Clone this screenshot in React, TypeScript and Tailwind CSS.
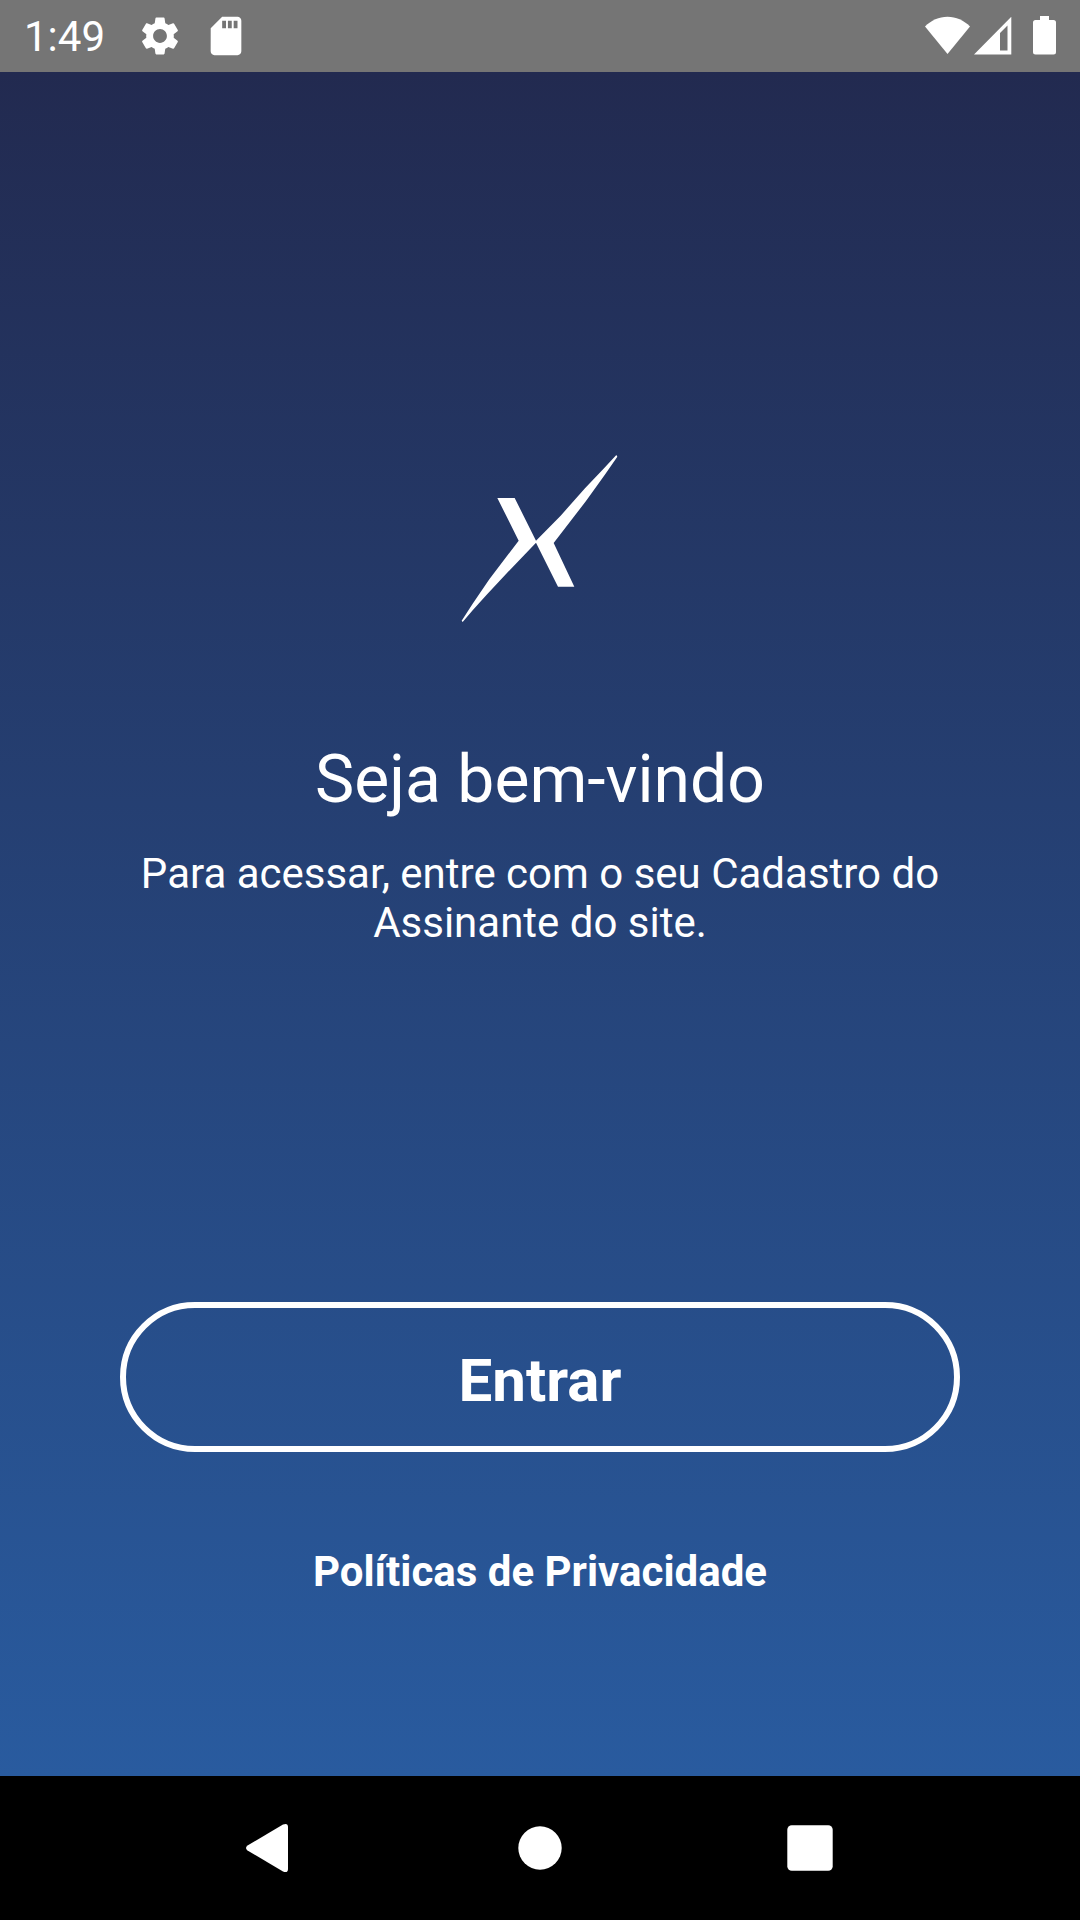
import React from "react";
import { MdSdCard, MdSettings } from "react-icons/md";

function StatusBar() {
  return (
    <header className="flex h-18 items-center justify-between bg-[#757575] pl-6 pr-5 text-white">
      <div className="flex items-center">
        <span className="pt-0.5 text-[42px] leading-[50px]">1:49</span>
        <MdSettings className="ml-8 size-[46px]" aria-hidden="true" />
        <MdSdCard className="ml-5 size-[46px]" aria-hidden="true" />
      </div>

      <div className="flex items-center">
        {/* Wi-Fi */}
        <svg className="h-10 w-[46px]" viewBox="0 0 46 40" fill="currentColor" aria-hidden="true">
          <path d="M0 10.500C6 4.500 14 .8 22.500 .8S39 4.500 45 10.500L22.500 38Z" />
        </svg>
        {/* Sinal */}
        <svg className="ml-[3px] h-10 w-[38px]" viewBox="0 0 38 40" fill="currentColor" aria-hidden="true">
          <path fillRule="evenodd" d="M0 38.500L37.300 .8V38.500ZM26 17V34.500H33.500V9.500Z" />
        </svg>
        {/* Bateria */}
        <svg className="ml-5 h-10 w-7" viewBox="0 0 28 40" fill="currentColor" aria-hidden="true">
          <path d="M8 0H17V4H21.500Q24 4 24 6.500V36Q24 38.500 21.500 38.500H3.500Q1 38.500 1 36V6.500Q1 4 3.500 4H8Z" />
        </svg>
      </div>
    </header>
  );
}

function Logo() {
  return (
    <svg className="h-[213px] w-[200px]" viewBox="0 -39 600 639" fill="#fff" role="img" aria-label="Logo">
      <path d="M172 171H224L288 299L362 224L435 142L490 84L529 42L532 47L494 102L438 180L341 306L403 437H354L288 305L196 401L140 461L98 508L68 543L65 539L98 488L148 415L236 299Z" />
    </svg>
  );
}

function NavBar() {
  return (
    <nav className="grid h-36 grid-cols-3 bg-black px-[12.5%] text-white">
      <button type="button" aria-label="Voltar" className="flex items-center justify-center">
        <svg className="size-[60px]" viewBox="0 0 60 60" fill="currentColor" aria-hidden="true">
          <path d="M43 6.500Q48 4.500 48 9V51Q48 55.500 43 53.500L7.500 32.500Q4.500 30 7.500 27.500Z" />
        </svg>
      </button>
      <button type="button" aria-label="Início" className="flex items-center justify-center">
        <svg className="size-[60px]" viewBox="0 0 60 60" fill="currentColor" aria-hidden="true">
          <circle cx="30" cy="30" r="21.700" />
        </svg>
      </button>
      <button type="button" aria-label="Recentes" className="flex items-center justify-center">
        <svg className="size-[60px]" viewBox="0 0 60 60" fill="currentColor" aria-hidden="true">
          <rect x="7.300" y="7.300" width="45.400" height="45.400" rx="4.500" />
        </svg>
      </button>
    </nav>
  );
}

export default function App() {
  return (
    <div className="flex min-h-screen flex-col font-['Roboto',sans-serif]">
      <StatusBar />

      <main className="flex flex-1 flex-col items-center bg-linear-to-b/srgb from-[#222a50] to-[#295b9f] px-30 pb-[180px] text-center text-white">
        <div className="flex flex-1 flex-col items-center justify-center">
          <Logo />
          <h1 className="mt-[100px] text-[66px] leading-[78px]">Seja bem-vindo</h1>
          <p className="mt-[30px] text-[42px] leading-[49px]">
            Para acessar, entre com o seu Cadastro do Assinante do site.
          </p>
        </div>

        <button
          type="button"
          className="h-[150px] w-full cursor-pointer rounded-full border-6 border-white pt-2 text-[60px] font-bold"
        >
          Entrar
        </button>
        <a href="#privacidade" className="mt-[95px] text-[42px] leading-[49px] font-bold">
          Políticas de Privacidade
        </a>
      </main>

      <NavBar />
    </div>
  );
}
